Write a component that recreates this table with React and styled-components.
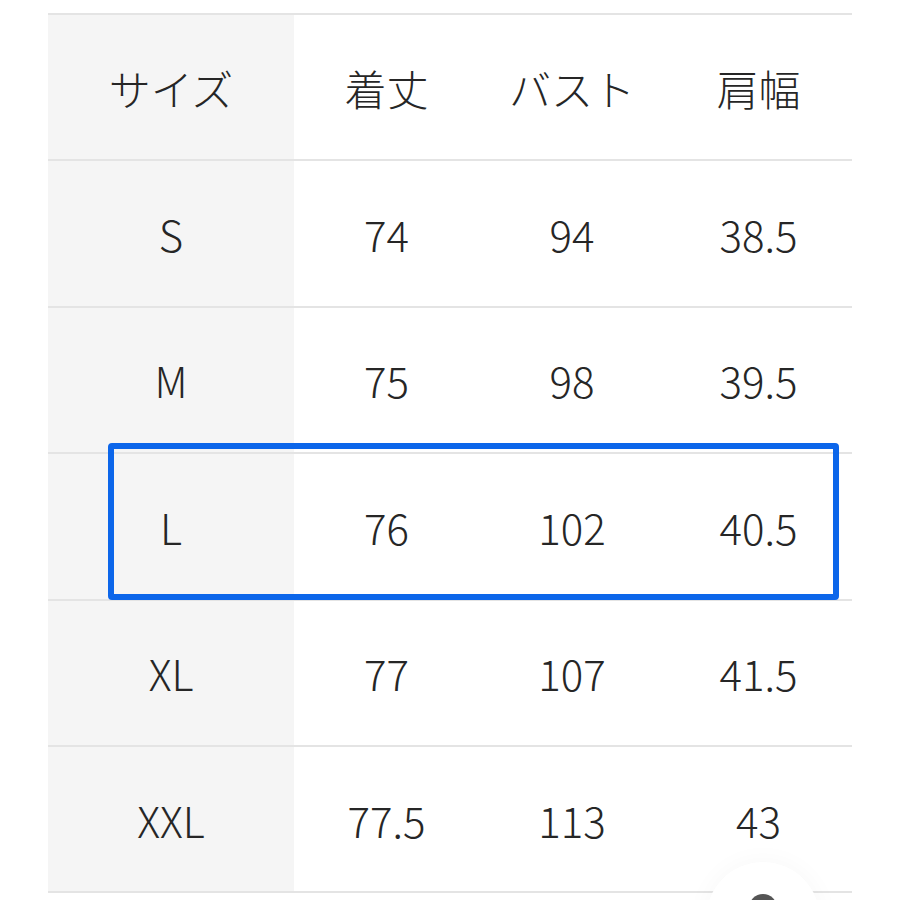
import React from "react";
import styled, { createGlobalStyle } from "styled-components";

const Global = createGlobalStyle`
  html, body { margin: 0; padding: 0; background: #ffffff; }
  body { width: 900px; height: 900px; overflow: hidden; }
`;

const Page = styled.div`
  position: relative;
  width: 900px;
  height: 900px;
  padding: 13px 0 0 48px;
  box-sizing: border-box;
  overflow: hidden;
  font-family: "Noto Sans CJK JP", "Noto Sans", sans-serif;
  color: #262626;
`;

const Table = styled.div`
  position: relative;
  width: 804px;
  border-top: 2px solid #e4e4e4;
`;

const Row = styled.div`
  display: grid;
  grid-template-columns: 246px 185px 186px 187px;
  height: 146.4px;
  box-sizing: border-box;
  border-bottom: 2px solid #e4e4e4;
`;

const Cell = styled.div`
  display: flex;
  align-items: center;
  justify-content: center;
  padding-top: 1px;
  font-size: 42px;
  font-weight: 300;
  line-height: 1;
  background: ${(p) => (p.$head ? "#f5f5f5" : "#ffffff")};
`;

const Highlight = styled.div`
  position: absolute;
  left: 60px;
  top: 428px;
  width: 731px;
  height: 157px;
  box-sizing: border-box;
  border: 6px solid #0c66ea;
  border-radius: 4px;
  pointer-events: none;
`;

const Fab = styled.div`
  position: absolute;
  left: 706px;
  top: 862px;
  width: 114px;
  height: 114px;
  border-radius: 50%;
  background: #ffffff;
  box-shadow: 0 0 26px rgba(0, 0, 0, 0.035);
  display: flex;
  justify-content: center;
`;

const FabIcon = styled.div`
  margin-top: 32px;
  width: 28px;
  height: 28px;
  border-radius: 50%;
  background: #555555;
`;

const header = ["サイズ", "着丈", "バスト", "肩幅"];
const rows = [
  ["S", "74", "94", "38.5"],
  ["M", "75", "98", "39.5"],
  ["L", "76", "102", "40.5"],
  ["XL", "77", "107", "41.5"],
  ["XXL", "77.5", "113", "43"],
];

export default function App() {
  return (
    <>
      <Global />
      <Page>
        <Table>
          {[header, ...rows].map((r, i) => (
            <Row key={i}>
              {r.map((c, j) => (
                <Cell key={j} $head={j === 0}>
                  {c}
                </Cell>
              ))}
            </Row>
          ))}
          <Highlight />
        </Table>
        <Fab>
          <FabIcon />
        </Fab>
      </Page>
    </>
  );
}
